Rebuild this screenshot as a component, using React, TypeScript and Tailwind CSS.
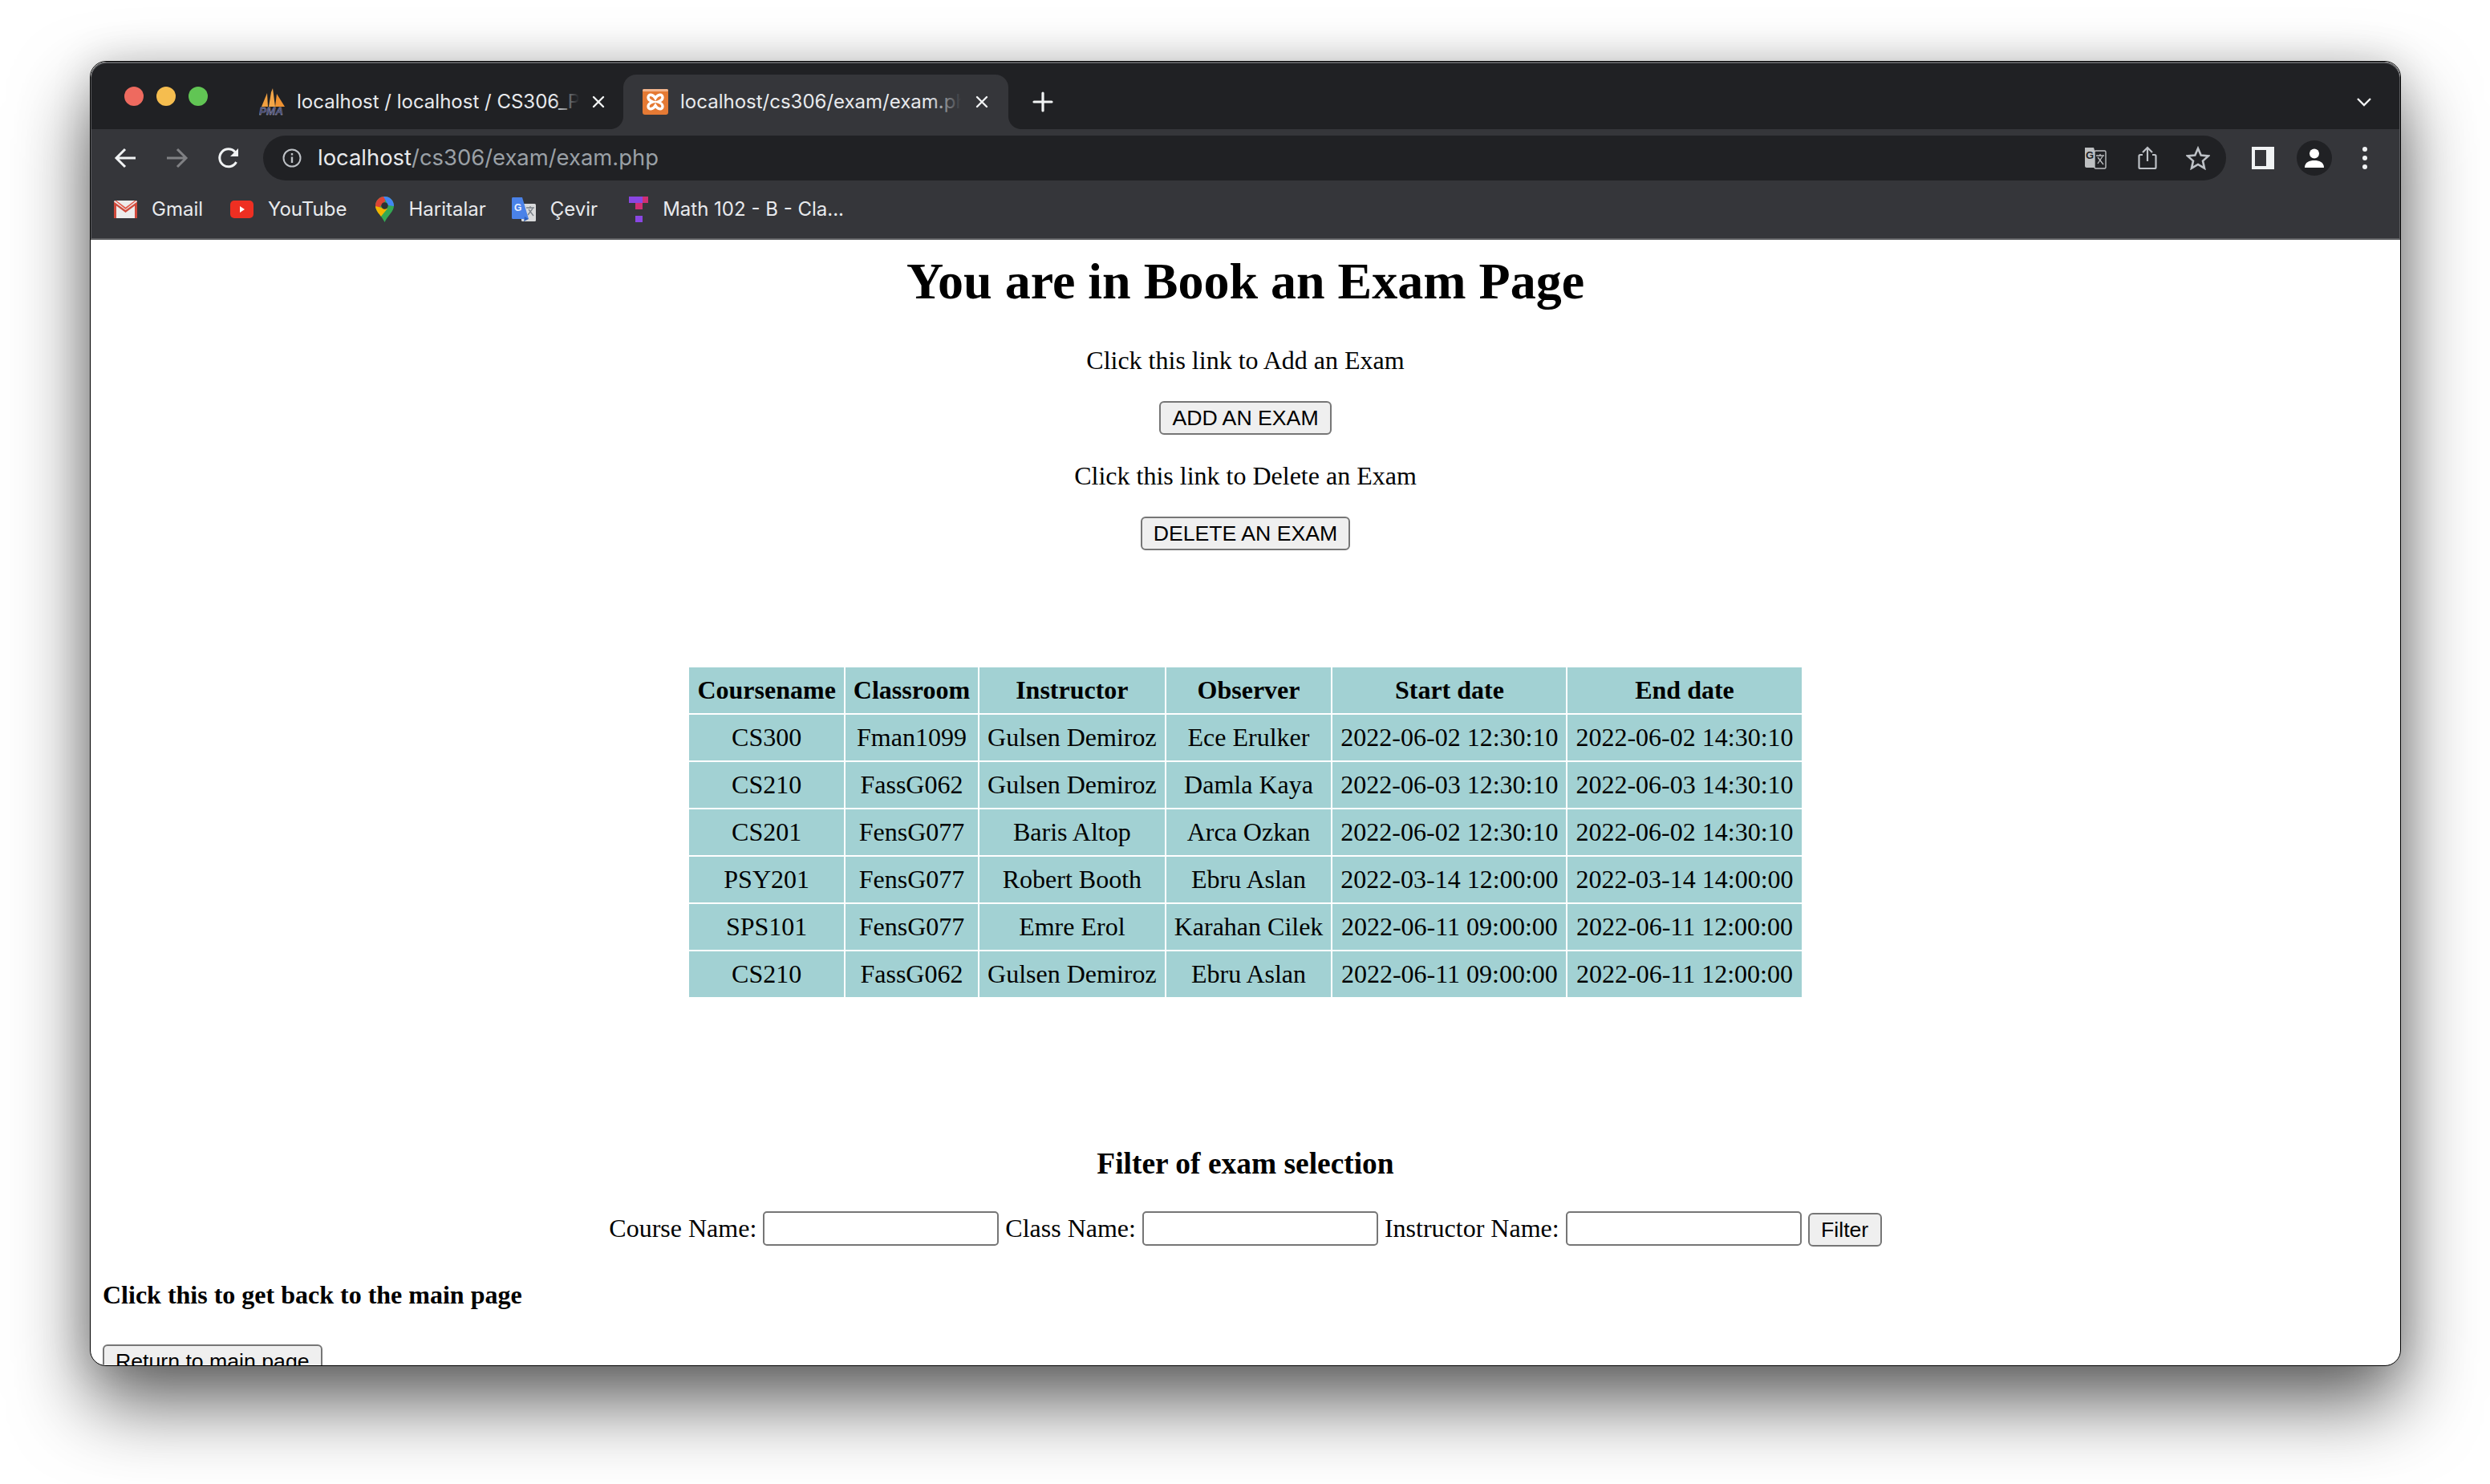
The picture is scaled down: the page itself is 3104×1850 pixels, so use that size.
const rows = [
  ["CS300", "Fman1099", "Gulsen Demiroz", "Ece Erulker", "2022-06-02 12:30:10", "2022-06-02 14:30:10"],
  ["CS210", "FassG062", "Gulsen Demiroz", "Damla Kaya", "2022-06-03 12:30:10", "2022-06-03 14:30:10"],
  ["CS201", "FensG077", "Baris Altop", "Arca Ozkan", "2022-06-02 12:30:10", "2022-06-02 14:30:10"],
  ["PSY201", "FensG077", "Robert Booth", "Ebru Aslan", "2022-03-14 12:00:00", "2022-03-14 14:00:00"],
  ["SPS101", "FensG077", "Emre Erol", "Karahan Cilek", "2022-06-11 09:00:00", "2022-06-11 12:00:00"],
  ["CS210", "FassG062", "Gulsen Demiroz", "Ebru Aslan", "2022-06-11 09:00:00", "2022-06-11 12:00:00"],
];
const headers = ["Coursename", "Classroom", "Instructor", "Observer", "Start date", "End date"];

function PmaIcon() {
  return (
    <svg width="34" height="34" viewBox="0 0 34 34">
      <path d="M3 23 L10 6 L11 23Z" fill="#f0a040" />
      <path d="M12 23 L15 5 L17 0 L20 23Z" fill="#f2a649" />
      <path d="M20 23 L22 7 L32 23Z" fill="#ee9232" />
      <text x="0" y="33" fontSize="13.5" fontWeight="700" fontStyle="italic" fontFamily="Liberation Sans, sans-serif" fill="#3d4273" stroke="#c9cbdc" strokeWidth="0.3">PMA</text>
    </svg>
  );
}

function XamppIcon() {
  return (
    <svg width="32" height="32" viewBox="0 0 32 32">
      <rect width="32" height="32" rx="3" fill="#e57a34" />
      <rect width="32" height="3" rx="1.5" fill="#f3b58c" />
      <path d="M7 10.5C7 6 13 6 16 11.5C19 6 25 6 25 10.5C25 13 22 15 19 16C22 17 25 19 25 21.5C25 26 19 26 16 20.5C13 26 7 26 7 21.5C7 19 10 17 13 16C10 15 7 13 7 10.5Z" fill="none" stroke="#fff" strokeWidth="3.4" />
    </svg>
  );
}

function CloseIcon() {
  return (
    <svg width="16" height="16" viewBox="0 0 16 16">
      <path d="M2 2L14 14M14 2L2 14" stroke="#f1f3f4" strokeWidth="2.4" strokeLinecap="round" />
    </svg>
  );
}

function GmailIcon() {
  return (
    <svg width="29" height="22" viewBox="0 0 29 22">
      <rect width="29" height="22" rx="1.5" fill="#ececec" />
      <path d="M0 1.5L14.5 12L29 1.5V22H26V6.5L14.5 15L3 6.5V22H0Z" fill="#cf4a3c" />
      <path d="M1 0H3L14.5 8.5L26 0H28L14.5 11Z" fill="#e25b4c" />
    </svg>
  );
}

function YoutubeIcon() {
  return (
    <svg width="29" height="22" viewBox="0 0 29 22">
      <rect width="29" height="22" rx="5" fill="#ee2f22" />
      <path d="M12 7L18 11L12 15Z" fill="#fff" />
    </svg>
  );
}

function MapsIcon() {
  return (
    <svg width="23" height="32" viewBox="0 0 23 32">
      <defs>
        <clipPath id="pin">
          <path d="M11.5 0C5 0 0 5 0 11.5C0 19 8 24 11.5 32C15 24 23 19 23 11.5C23 5 18 0 11.5 0Z" />
        </clipPath>
      </defs>
      <g clipPath="url(#pin)">
        <rect width="23" height="32" fill="#34a853" />
        <path d="M0 0H12V6L3 16L0 14Z" fill="#db4437" />
        <path d="M10 0H23V12L16 11Z" fill="#4285f4" />
        <path d="M0 12L8 14L3 24L0 20Z" fill="#f4b400" />
        <path d="M8 14L15 15L6 26L3 20Z" fill="#f4b400" />
      </g>
      <circle cx="11.5" cy="11.5" r="4.2" fill="#2e3035" />
    </svg>
  );
}

function TranslateBookmarkIcon() {
  return (
    <svg width="30" height="30" viewBox="0 0 30 30">
      <rect x="12" y="8" width="18" height="22" rx="1.5" fill="#d9dadb" />
      <path d="M0 1.5C0 .6.6 0 1.5 0H13L21 27H1.5C.6 27 0 26.4 0 25.5Z" fill="#4a82e8" />
      <path d="M16 24L21 27L15 30Z" fill="#2f5fb8" />
      <text x="3" y="17" fontSize="12" fontWeight="700" fill="#e8f0ff" fontFamily="Liberation Sans, sans-serif">G</text>
      <path d="M18 13H28M23 11V13M20 22L26 14M21 15L27 23" stroke="#7a8088" strokeWidth="1.3" fill="none" />
    </svg>
  );
}

function MathIcon() {
  return (
    <svg width="24" height="32" viewBox="0 0 24 32">
      <rect width="17" height="8" fill="#8a46e2" />
      <rect x="17" width="7" height="8" fill="#d02f74" />
      <rect x="8" y="8" width="9" height="8" fill="#d02f74" />
      <rect x="8" y="24" width="9" height="8" fill="#8a46e2" />
    </svg>
  );
}

function Bookmark({ icon, label, className }: { icon: React.ReactNode; label: string; className: string }) {
  return (
    <div className={`flex items-center h-8 ${className}`}>
      <div className="flex items-center justify-center">{icon}</div>
      <span className="text-[24px] leading-none text-[#e8eaed] ml-[18px]">{label}</span>
    </div>
  );
}

function PageButton({ label, className }: { label: string; className: string }) {
  return (
    <button className={`h-[42px] bg-[#efefef] border-2 border-[#767676] rounded-[6px] text-[26.67px] leading-[30px] text-black font-['Liberation_Sans',sans-serif] ${className}`}>
      {label}
    </button>
  );
}

function TextBox() {
  return <input type="text" className="inline-block w-[294px] h-[43px] bg-white border-2 border-[#767676] rounded-[5px] align-baseline" />;
}

export default function App() {
  return (
    <div className="w-[3104px] h-[1850px] bg-white overflow-hidden pt-[76px] pl-[112px]">
      <div className="w-[2881px] h-[1627px] bg-white border border-black rounded-[20px] overflow-hidden shadow-[0_46px_95px_rgba(0,0,0,0.62),0_0_50px_rgba(0,0,0,0.14)]">
        {/* Browser chrome */}
        <div className="bg-[#202124] border-x border-t-2 border-[#5b5c5f] rounded-t-[20px] font-['Inter',sans-serif]">
          <div className="flex items-end h-[82px] pl-[41px]">
            <div className="flex gap-4 self-start mt-[29px]">
              <div className="w-6 h-6 rounded-full bg-[#ee6a5f]"></div>
              <div className="w-6 h-6 rounded-full bg-[#f5bd4f]"></div>
              <div className="w-6 h-6 rounded-full bg-[#61c554]"></div>
            </div>

            {/* Inactive tab */}
            <div className="flex items-center h-[68px] w-[454px] ml-[64px]">
              <PmaIcon />
              <div className="relative w-[352px] ml-[13px] overflow-hidden">
                <span className="block whitespace-nowrap text-[24px] leading-[30px] text-[#e8eaed]">localhost / localhost / CS306_P</span>
                <div className="absolute top-0 right-0 w-8 h-full bg-gradient-to-r from-transparent to-[#202124]"></div>
              </div>
              <div className="ml-[16px]"><CloseIcon /></div>
            </div>

            {/* Active tab */}
            <div className="relative flex items-center h-[68px] w-[480px] pl-6 bg-[#35363a] rounded-t-[16px]">
              <div className="absolute bottom-0 -left-4 w-4 h-4 bg-[#35363a]">
                <div className="w-4 h-4 bg-[#202124] rounded-br-[16px]"></div>
              </div>
              <div className="absolute bottom-0 -right-4 w-4 h-4 bg-[#35363a]">
                <div className="w-4 h-4 bg-[#202124] rounded-bl-[16px]"></div>
              </div>
              <XamppIcon />
              <div className="relative w-[350px] ml-[15px] overflow-hidden">
                <span className="block whitespace-nowrap text-[24px] leading-[30px] text-[#e8eaed]">localhost/cs306/exam/exam.ph</span>
                <div className="absolute top-0 right-0 w-10 h-full bg-gradient-to-r from-transparent to-[#35363a]"></div>
              </div>
              <div className="ml-[18px]"><CloseIcon /></div>
            </div>

            <div className="h-[68px] flex items-center ml-[30px]">
              <svg width="26" height="26" viewBox="0 0 26 26">
                <path d="M13 2V24M2 13H24" stroke="#f1f3f4" strokeWidth="3.2" strokeLinecap="round" />
              </svg>
            </div>

            <div className="h-[68px] flex items-center ml-auto mr-[34px]">
              <svg width="20" height="12" viewBox="0 0 20 12">
                <path d="M2 2L10 10L18 2" stroke="#f1f3f4" strokeWidth="2.4" fill="none" />
              </svg>
            </div>
          </div>

          {/* Address bar */}
          <div className="flex items-center h-[72px] bg-[#35363a] pl-[28px]">
            <svg width="28" height="28" viewBox="0 0 28 28">
              <path d="M27 14H3M14 3L3 14L14 25" stroke="#f1f3f4" strokeWidth="3" fill="none" />
            </svg>
            <svg className="ml-[37px]" width="28" height="28" viewBox="0 0 28 28">
              <path d="M1 14H25M14 3L25 14L14 25" stroke="#808184" strokeWidth="3" fill="none" />
            </svg>
            <svg className="ml-[36px]" width="28" height="28" viewBox="0 0 28 28">
              <path d="M23.5 19A11 11 0 1 1 22 6.5" stroke="#f1f3f4" strokeWidth="3" fill="none" />
              <path d="M26 2V12H16Z" fill="#f1f3f4" />
            </svg>
            <div className="flex items-center h-14 w-[2447px] ml-[29px] rounded-full bg-[#202124]">
              <svg className="ml-[24px]" width="24" height="24" viewBox="0 0 24 24">
                <circle cx="12" cy="12" r="10.5" stroke="#bdc1c6" strokeWidth="2" fill="none" />
                <path d="M12 10.5V18M12 6V8.5" stroke="#bdc1c6" strokeWidth="2.4" />
              </svg>
              <div className="text-[27.4px] leading-none ml-[20px]">
                <span className="text-[#e8eaed]">localhost</span>
                <span className="text-[#9aa0a6]">/cs306/exam/exam.php</span>
              </div>
              <div className="flex items-center ml-auto mr-[20px] gap-[36px]">
                <svg className="mr-[3px]" width="28" height="28" viewBox="0 0 28 28">
                  <path d="M1 1H12L20 26H3C2 26 1 25 1 24Z" fill="#bdbfc1" />
                  <rect x="13" y="5" width="14" height="22" rx="1.5" fill="#202124" stroke="#bdbfc1" strokeWidth="1.4" />
                  <text x="2" y="15" fontSize="13" fontWeight="700" fill="#202124" fontFamily="Liberation Sans, sans-serif">G</text>
                  <path d="M15 11H25M20 9V11M17 21L23 12M17 13L24 22" stroke="#bdbfc1" strokeWidth="1.3" fill="none" />
                </svg>
                <svg width="24" height="30" viewBox="0 0 24 30">
                  <path d="M6 11H3C2 11 1.5 11.6 1.5 12.5V26.5C1.5 27.5 2 28 3 28H21C22 28 22.5 27.5 22.5 26.5V12.5C22.5 11.6 22 11 21 11H18" stroke="#bdc1c6" strokeWidth="2.2" fill="none" />
                  <path d="M12 19V2M6 8L12 2L18 8" stroke="#bdc1c6" strokeWidth="2.2" fill="none" />
                </svg>
                <svg width="30" height="30" viewBox="0 0 30 30">
                  <path d="M15 3L18.7 11.5L28 12.4L21 18.6L23 27.7L15 23L7 27.7L9 18.6L2 12.4L11.3 11.5Z" stroke="#bdc1c6" strokeWidth="2.6" fill="none" />
                </svg>
              </div>
            </div>
            <div className="w-7 h-7 ml-[32px] flex bg-[#f1f3f4] p-1 pr-[10px]">
              <div className="w-full h-full bg-[#35363a]"></div>
            </div>
            <div className="flex items-center justify-center w-11 h-11 ml-[28px] rounded-full bg-[#202124]">
              <svg width="26" height="26" viewBox="0 0 26 26">
                <circle cx="13" cy="7.5" r="6" fill="#fff" />
                <path d="M1 25C1 18 7 16 13 16C19 16 25 18 25 25Z" fill="#fff" />
              </svg>
            </div>
            <div className="flex flex-col gap-[5px] ml-[38px]">
              <div className="w-1.5 h-1.5 rounded-full bg-[#f1f3f4]"></div>
              <div className="w-1.5 h-1.5 rounded-full bg-[#f1f3f4]"></div>
              <div className="w-1.5 h-1.5 rounded-full bg-[#f1f3f4]"></div>
            </div>
          </div>

          {/* Bookmarks */}
          <div className="flex items-center box-content h-[56px] pb-2 pl-[28px] bg-[#35363a] border-b-2 border-[#5f6063]">
            <Bookmark icon={<GmailIcon />} label="Gmail" className="" />
            <Bookmark icon={<YoutubeIcon />} label="YouTube" className="ml-[34px]" />
            <Bookmark icon={<MapsIcon />} label="Haritalar" className="ml-[36px]" />
            <Bookmark icon={<TranslateBookmarkIcon />} label="Çevir" className="ml-[32px]" />
            <Bookmark icon={<MathIcon />} label="Math 102 - B - Cla..." className="ml-[39px]" />
          </div>
        </div>

        {/* Page */}
        <div className="relative px-[15px] text-black font-['Liberation_Serif',serif] text-[32px] leading-[37px]">
          <div className="text-center">
            <h1 className="pt-[15px] text-[64px] leading-[74px] font-bold">You are in Book an Exam Page</h1>
            <p className="mt-[43px]">Click this link to Add an Exam</p>
            <PageButton label="ADD AN EXAM" className="mt-[32px] block mx-auto px-[14px]" />
            <p className="mt-[33px]">Click this link to Delete an Exam</p>
            <PageButton label="DELETE AN EXAM" className="mt-[32px] block mx-auto px-[14px]" />

            <table className="mt-[144px] mx-auto border-separate border-spacing-[2px]">
              <thead>
                <tr>
                  {headers.map((h) => (
                    <th key={h} className="px-[10px] h-[57px] bg-[#a2d1d3] font-bold">{h}</th>
                  ))}
                </tr>
              </thead>
              <tbody>
                {rows.map((row, i) => (
                  <tr key={i}>
                    {row.map((cell, j) => (
                      <td key={j} className="px-[10px] h-[57px] bg-[#a2d1d3] text-center">{cell}</td>
                    ))}
                  </tr>
                ))}
              </tbody>
            </table>

            <h3 className="mt-[184px] text-[37.44px] leading-[43px] font-bold">Filter of exam selection</h3>
            <div className="mt-[38px] leading-[43px]">
              Course Name: <TextBox /> Class Name: <TextBox /> Instructor Name: <TextBox />{" "}
              <PageButton label="Filter" className="w-[92px]" />
            </div>
          </div>
          <h4 className="mt-[42px] font-bold">Click this to get back to the main page</h4>
          <PageButton label="Return to main page" className="mt-[43px] px-[14px]" />
        </div>
      </div>
    </div>
  );
}
